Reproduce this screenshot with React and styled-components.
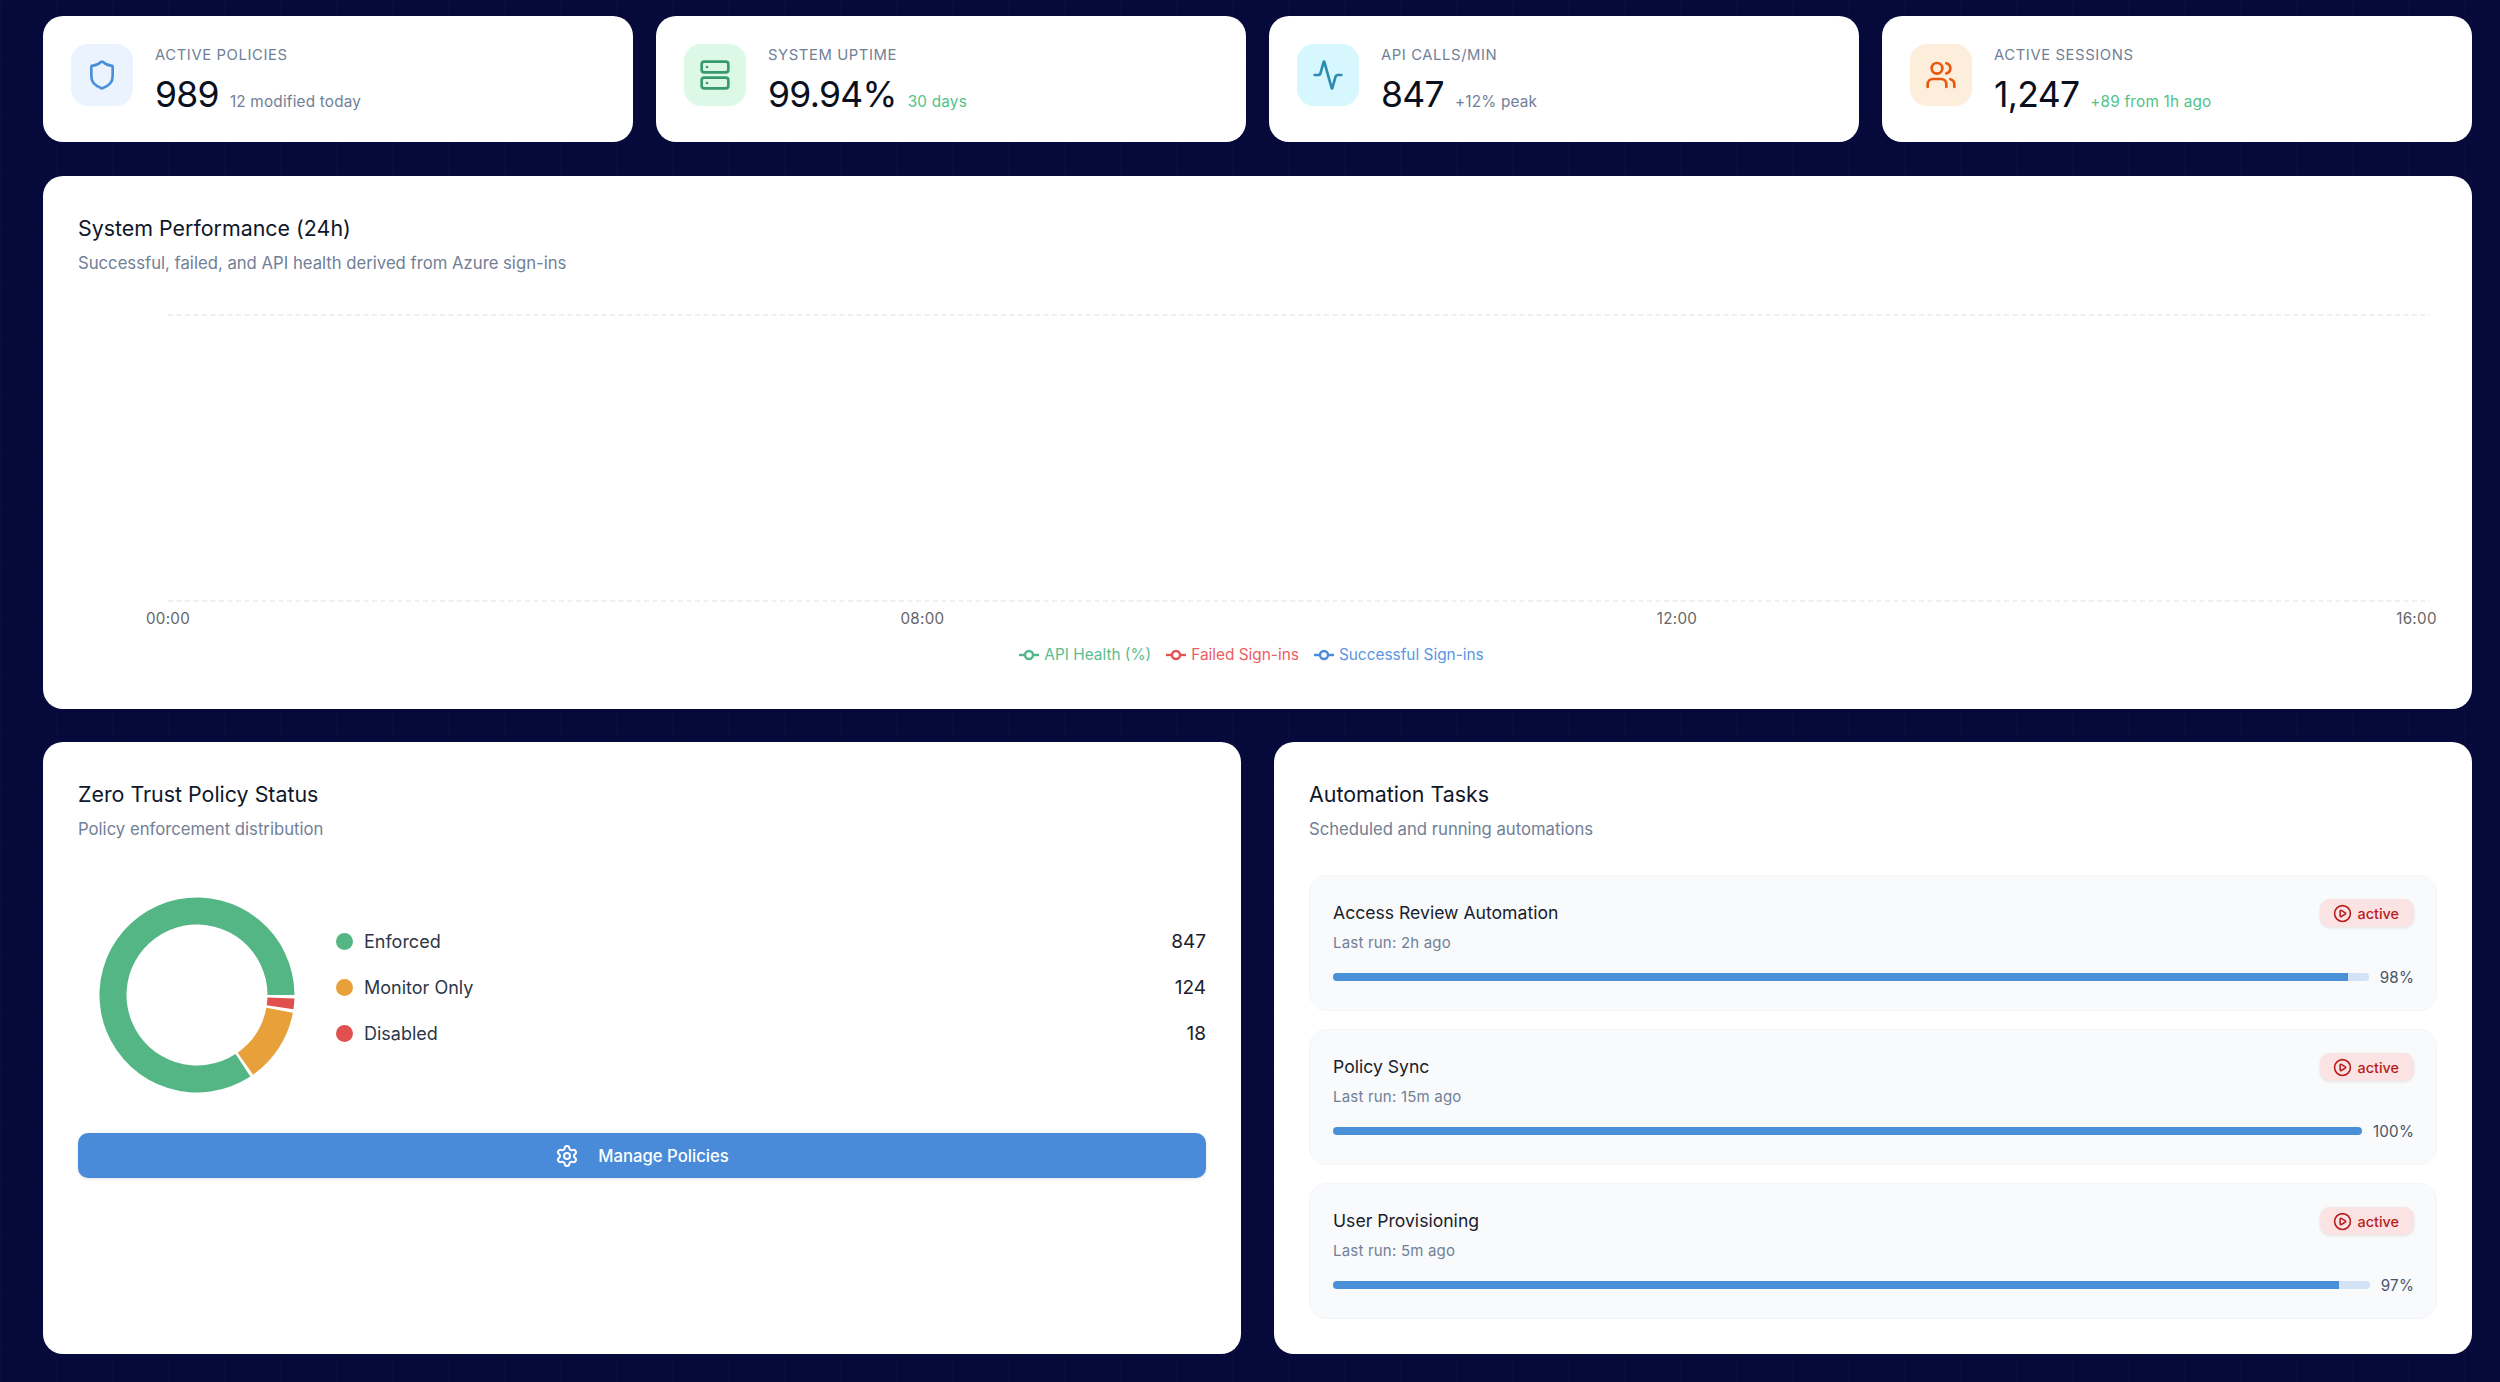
import React from 'react';
import styled, { createGlobalStyle } from 'styled-components';
import { Shield, Server, Activity, Users, Settings, CirclePlay } from 'lucide-react';

const GlobalStyle = createGlobalStyle`
  html, body {
    margin: 0;
    padding: 0;
    background: #050a3a;
  }
  * {
    box-sizing: border-box;
  }
  body {
    font-family: Inter, "Liberation Sans", sans-serif;
  }
`;

const Page = styled.main`
  width: 2500px;
  height: 1382px;
  overflow: hidden;
  padding: 16px 28px 29px 43px;
  background-color: #050a3a;
  background-image:
    linear-gradient(rgba(255, 255, 255, 0.012) 1px, transparent 1px),
    linear-gradient(90deg, rgba(255, 255, 255, 0.012) 1px, transparent 1px);
  background-size: 56px 56px;
`;

const StatsRow = styled.section`
  display: grid;
  grid-template-columns: repeat(4, 1fr);
  gap: 23px;
  margin-bottom: 34px;
`;

const StatCard = styled.article`
  display: flex;
  align-items: flex-start;
  gap: 22px;
  height: 126px;
  padding: 28px;
  background: #fff;
  border-radius: 20px;
`;

const IconBox = styled.div`
  display: flex;
  align-items: center;
  justify-content: center;
  flex: none;
  width: 62px;
  height: 62px;
  border-radius: 17px;
  background: ${p => p.$bg};
  color: ${p => p.$fg};
`;

const StatBody = styled.div`
  display: flex;
  flex-direction: column;
`;

const StatLabel = styled.div`
  font-size: 14.8px;
  line-height: 22px;
  letter-spacing: 0.6px;
  color: #718096;
`;

const StatValueRow = styled.div`
  display: flex;
  align-items: baseline;
  gap: 11px;
  margin-top: 6px;
`;

const StatValue = styled.span`
  font-size: 35.5px;
  line-height: 46px;
  letter-spacing: -0.7px;
  color: #0a0f1e;
`;

const StatNote = styled.span`
  font-size: 15.3px;
  letter-spacing: 0.2px;
  color: ${p => (p.$good ? '#4fc38a' : '#718096')};
`;

const Panel = styled.section`
  padding: 35px;
  background: #fff;
  border-radius: 20px;
`;

const PanelTitle = styled.h2`
  margin: 0;
  font-size: 21.4px;
  font-weight: 400;
  line-height: 34px;
  color: #0f172a;
`;

const PanelSub = styled.p`
  margin: 5px 0 0;
  font-size: 16.7px;
  line-height: 26px;
  color: #718096;
`;

const ChartPanel = styled(Panel)`
  height: 533px;
  margin-bottom: 33px;
`;

const ChartSvg = styled.svg`
  display: block;
  width: 100%;
  height: 350px;
  overflow: visible;
`;

const Tick = styled.text`
  font-size: 15.2px;
  letter-spacing: 0.3px;
  fill: #666;
  text-anchor: middle;
  dominant-baseline: central;
`;

const ChartLegend = styled.ul`
  display: flex;
  justify-content: center;
  gap: 15px;
  list-style: none;
  margin: 17px 0 0;
  padding: 0 12px 0 0;
`;

const ChartLegendItem = styled.li`
  display: flex;
  align-items: center;
  gap: 5px;
  font-size: 15.4px;
  line-height: 24px;
  color: ${p => p.$color};
`;

const LowerRow = styled.div`
  display: grid;
  grid-template-columns: 1fr 1fr;
  gap: 33px;
`;

const LowerPanel = styled(Panel)`
  height: 612px;
`;

const DonutRow = styled.div`
  display: flex;
  align-items: center;
  height: 239px;
  margin-top: 33px;
  padding-left: 21px;
`;

const StatusList = styled.ul`
  flex: 1;
  list-style: none;
  margin: 0 0 15px 41px;
  padding: 0;
`;

const StatusRow = styled.li`
  display: flex;
  align-items: center;
  height: 46px;
  font-size: 18px;
  color: #2d3748;
`;

const StatusDot = styled.span`
  width: 17px;
  height: 17px;
  margin-right: 11px;
  border-radius: 50%;
  background: ${p => p.$color};
`;

const StatusCount = styled.span`
  margin-left: auto;
  font-size: 19px;
  color: #1a202c;
`;

const ManageButton = styled.button`
  display: flex;
  align-items: center;
  justify-content: center;
  gap: 19px;
  width: 100%;
  height: 45px;
  margin-top: 19px;
  border: 0;
  border-radius: 10px;
  background: #4a8bd9;
  box-shadow: 0 1px 3px rgba(0, 0, 0, 0.12);
  color: #fff;
  font-family: inherit;
  font-size: 16.7px;
  font-weight: 500;
`;

const TaskList = styled.div`
  display: flex;
  flex-direction: column;
  gap: 18px;
  margin-top: 33px;
`;

const TaskCard = styled.article`
  height: 136px;
  padding: 23px 22px 0 23px;
  background: #f8fafc;
  border: 1px solid #f3f5f9;
  border-radius: 18px;
`;

const TaskHead = styled.div`
  display: flex;
  justify-content: space-between;
  align-items: flex-start;
`;

const TaskName = styled.div`
  font-size: 17.6px;
  line-height: 28px;
  color: #1a202c;
`;

const TaskMeta = styled.div`
  margin-top: 4px;
  font-size: 15px;
  line-height: 24px;
  letter-spacing: 0.2px;
  color: #718096;
`;

const Badge = styled.span`
  display: flex;
  align-items: center;
  gap: 6px;
  height: 28px;
  padding: 0 15px 0 13px;
  border-radius: 10px;
  background: #fbe3e3;
  box-shadow: 0 1px 3px rgba(0, 0, 0, 0.1);
  color: #b91c1c;
  font-size: 14.4px;
  font-weight: 500;
`;

const ProgressRow = styled.div`
  display: flex;
  align-items: center;
  gap: 11px;
  height: 24px;
  margin-top: 10px;
`;

const Track = styled.div`
  flex: 1;
  height: 8px;
  overflow: hidden;
  border-radius: 4px;
  background: #d3e2f4;
`;

const Fill = styled.div`
  height: 100%;
  background: #4a90d9;
`;

const Percent = styled.span`
  font-size: 15.2px;
  letter-spacing: 0.2px;
  color: #4a5568;
`;

const stats = [
  { label: 'Active Policies', value: '989', note: '12 modified today', Icon: Shield, bg: '#ebf4fe', fg: '#4a90d9' },
  { label: 'System Uptime', value: '99.94%', note: '30 days', good: true, Icon: Server, bg: '#dcf9e8', fg: '#38996b' },
  { label: 'API Calls/Min', value: '847', note: '+12% peak', Icon: Activity, bg: '#d5f7fd', fg: '#2b8db3' },
  { label: 'Active Sessions', value: '1,247', note: '+89 from 1h ago', good: true, Icon: Users, bg: '#fdeedb', fg: '#ea580c' },
];

const ticks = [
  { x: 90, label: '00:00' },
  { x: 844.5, label: '08:00' },
  { x: 1599, label: '12:00' },
  { x: 2338.5, label: '16:00' },
];

const series = [
  { name: 'API Health (%)', color: '#52b788', text: '#5cbd8e' },
  { name: 'Failed Sign-ins', color: '#e05252', text: '#e86060' },
  { name: 'Successful Sign-ins', color: '#4a8bd9', text: '#5a96e0' },
];

const policies = [
  { name: 'Enforced', count: 847, color: '#55b685' },
  { name: 'Monitor Only', count: 124, color: '#e8a13a' },
  { name: 'Disabled', count: 18, color: '#e0504e' },
];

const tasks = [
  { name: 'Access Review Automation', run: '2h ago', pct: 98 },
  { name: 'Policy Sync', run: '15m ago', pct: 100 },
  { name: 'User Provisioning', run: '5m ago', pct: 97 },
];

// ring sector, angles counter-clockwise from 3 o'clock like recharts
function sector(start, end, r1, r2, c) {
  const pt = (r, a) => {
    const t = (a * Math.PI) / 180;
    return `${(c + r * Math.cos(t)).toFixed(2)} ${(c - r * Math.sin(t)).toFixed(2)}`;
  };
  const large = end - start > 180 ? 1 : 0;
  return `M${pt(r2, start)} A${r2} ${r2} 0 ${large} 0 ${pt(r2, end)} L${pt(r1, end)} A${r1} ${r1} 0 ${large} 1 ${pt(r1, start)} Z`;
}

function Donut() {
  const pad = 2;
  const total = policies.reduce((n, p) => n + p.count, 0);
  let angle = 0;
  return (
    <svg width="196" height="196" viewBox="0 0 196 196" style={{ flex: 'none' }}>
      {policies.map(p => {
        const span = (p.count / total) * (360 - pad * policies.length);
        const d = sector(angle, angle + span, 70.5, 97.5, 98);
        angle += span + pad;
        return <path key={p.name} d={d} fill={p.color} />;
      })}
    </svg>
  );
}

function LegendMark({ color }) {
  return (
    <svg width="20" height="14" viewBox="0 0 20 14">
      <line x1="0" y1="7" x2="20" y2="7" stroke={color} strokeWidth="2.4" />
      <circle cx="10" cy="7" r="4" fill="#fff" stroke={color} strokeWidth="2.4" />
    </svg>
  );
}

export default function App() {
  return (
    <Page>
      <GlobalStyle />
      <StatsRow>
        {stats.map(({ label, value, note, good, Icon, bg, fg }) => (
          <StatCard key={label}>
            <IconBox $bg={bg} $fg={fg}>
              <Icon size={32} />
            </IconBox>
            <StatBody>
              <StatLabel>{label.toUpperCase()}</StatLabel>
              <StatValueRow>
                <StatValue>{value}</StatValue>
                <StatNote $good={good}>{note}</StatNote>
              </StatValueRow>
            </StatBody>
          </StatCard>
        ))}
      </StatsRow>

      <ChartPanel>
        <PanelTitle>System Performance (24h)</PanelTitle>
        <PanelSub>Successful, failed, and API health derived from Azure sign-ins</PanelSub>
        <ChartSvg>
          <line x1="90" y1="39" x2="2352" y2="39" stroke="#e8ebf1" strokeWidth="1.6" strokeDasharray="5 3.5" />
          <line x1="90" y1="325" x2="2352" y2="325" stroke="#e8ebf1" strokeWidth="1.6" strokeDasharray="5 3.5" />
          {ticks.map(t => (
            <Tick key={t.label} x={t.x} y="342.5">{t.label}</Tick>
          ))}
        </ChartSvg>
        <ChartLegend>
          {series.map(s => (
            <ChartLegendItem key={s.name} $color={s.text}>
              <LegendMark color={s.color} />
              {s.name}
            </ChartLegendItem>
          ))}
        </ChartLegend>
      </ChartPanel>

      <LowerRow>
        <LowerPanel>
          <PanelTitle>Zero Trust Policy Status</PanelTitle>
          <PanelSub>Policy enforcement distribution</PanelSub>
          <DonutRow>
            <Donut />
            <StatusList>
              {policies.map(p => (
                <StatusRow key={p.name}>
                  <StatusDot $color={p.color} />
                  {p.name}
                  <StatusCount>{p.count}</StatusCount>
                </StatusRow>
              ))}
            </StatusList>
          </DonutRow>
          <ManageButton>
            <Settings size={24} />
            Manage Policies
          </ManageButton>
        </LowerPanel>

        <LowerPanel>
          <PanelTitle>Automation Tasks</PanelTitle>
          <PanelSub>Scheduled and running automations</PanelSub>
          <TaskList>
            {tasks.map(task => (
              <TaskCard key={task.name}>
                <TaskHead>
                  <div>
                    <TaskName>{task.name}</TaskName>
                    <TaskMeta>Last run: {task.run}</TaskMeta>
                  </div>
                  <Badge>
                    <CirclePlay size={19} />
                    active
                  </Badge>
                </TaskHead>
                <ProgressRow>
                  <Track>
                    <Fill style={{ width: `${task.pct}%` }} />
                  </Track>
                  <Percent>{task.pct}%</Percent>
                </ProgressRow>
              </TaskCard>
            ))}
          </TaskList>
        </LowerPanel>
      </LowerRow>
    </Page>
  );
}
